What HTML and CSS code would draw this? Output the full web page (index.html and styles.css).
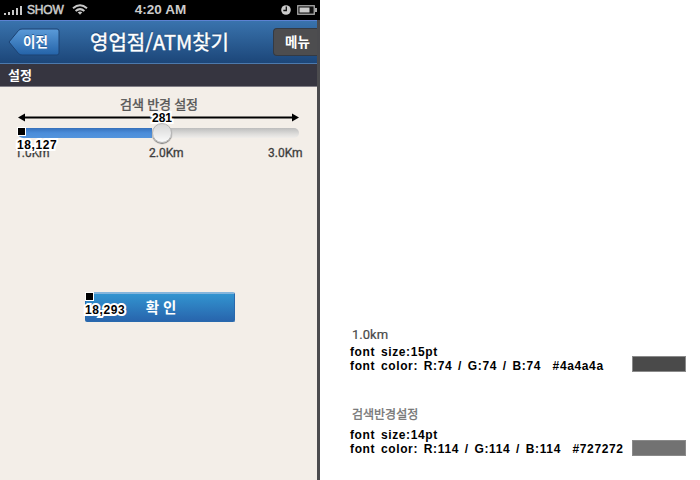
FILE: index.html
```
<!DOCTYPE html>
<html lang="ko">
<head>
<meta charset="utf-8">
<title>영업점/ATM찾기</title>
<link rel="stylesheet" href="styles.css">
</head>
<body>
<div class="page">
  <main class="phone">
    <div class="status">
      <div class="carrier">
        <svg width="20" height="12" viewBox="0 0 20 12" fill="#c8c8c8"><path d="M0 9h2v2H0zM4 8h2v3H4zM8 6h2v5H8zM12 4h2v7h-2zM16 2h2v9h-2z"/></svg>
        <span class="operator">SHOW</span>
        <svg class="wifi" width="16" height="12" viewBox="0 0 16 12" fill="none" stroke="#c8c8c8" stroke-width="2"><path d="M1 4.2Q8-1.8 15 4.2M3.6 7Q8 3.2 12.4 7"/><path d="M5.7 8.3Q8 6.7 10.3 8.3L8 10.8z" fill="#c8c8c8" stroke="none"/></svg>
      </div>
      <span class="time">4:20 AM</span>
      <div class="indicators">
        <svg width="10" height="10" viewBox="0 0 10 10"><circle cx="5" cy="5" r="4.8" fill="#ccc"/><path d="M5.3 1.5v4H2.3" fill="none" stroke="#111" stroke-width="1.3"/></svg>
        <svg width="20" height="10" viewBox="0 0 20 10"><rect x=".75" y=".75" width="16.5" height="8.5" fill="#111" stroke="#aaa" stroke-width="1.3"/><path d="M2.500 2.500h10v5h-10z" fill="#ccc"/><path d="M18 3h2v4h-2z" fill="#aaa"/></svg>
      </div>
    </div>
    <div class="screen">
      <header class="header">
        <div class="back">
          <svg class="back-shape" width="52" height="28" viewBox="0 0 52 28">
            <defs><linearGradient id="b" x2="0" y2="1"><stop stop-color="#5b9bd9"/><stop offset="1" stop-color="#2463a8"/></linearGradient></defs>
            <path d="M1 14L10.5 2.5Q12 1 14 1H49Q51 1 51 3V25Q51 27 49 27H14Q12 27 10.500 25.500Z" fill="url(#b)" stroke="#1c4273"/>
          </svg>
          <span class="back-label">이전</span>
        </div>
        <h1 class="title">영업점/ATM찾기</h1>
        <div class="menu">메뉴</div>
      </header>
      <h2 class="section">설정</h2>
      <div class="content">
        <div class="range-title">검색 반경 설정</div>
        <div class="track"><div class="fill"></div><div class="knob"></div></div>
        <div class="labels"><span>1.0Km</span><span>2.0Km</span><span>3.0Km</span></div>
        <div class="confirm">확 인</div>
      </div>
    </div>
    <svg class="arrow" width="282" height="10" viewBox="0 0 282 10"><path d="M5 4.500H277" stroke="#000" stroke-width="2"/><path d="M0 4.500L7 .5V8.500ZM281 4.500L274 .5V8.500Z"/></svg>
    <span class="note width-note">281</span>
    <i class="marker marker-track"></i>
    <span class="note track-note">18,127</span>
    <i class="marker marker-button"></i>
    <span class="note button-note">18,293</span>
  </main>
  <aside class="specs">
    <section class="spec">
      <div class="sample sample-km">1.0km</div>
      <div class="size">font size:15pt</div>
      <div class="color"><span class="values">font color: R:74 / G:74 / B:74&nbsp; #4a4a4a</span><span class="swatch dark"></span></div>
    </section>
    <section class="spec">
      <div class="sample sample-title">검색반경설정</div>
      <div class="size">font size:14pt</div>
      <div class="color"><span class="values">font color: R:114 / G:114 / B:114&nbsp; #727272</span><span class="swatch grey"></span></div>
    </section>
  </aside>
</div>
</body>
</html>
```
FILE: styles.css
```
* { box-sizing: border-box; }
body { margin: 0; background: #fff; font-family: "Liberation Sans", "Noto Sans CJK KR", sans-serif; }
svg { display: block; flex: none; }
.page { display: flex; width: 700px; height: 480px; overflow: hidden; }
.phone { position: relative; width: 320px; height: 480px; background: #4b4b4e; flex: none; white-space: nowrap; }
.status { display: grid; grid-template-columns: 1fr auto 1fr; align-items: center; height: 20px; padding: 0 3px 0 4px; background: #000; color: #ccc; font-size: 13px; line-height: 20px; }
.carrier { display: flex; align-items: center; }
.operator { width: 37px; margin-left: 3px; font-size: 12px; letter-spacing: -.2px; -webkit-text-stroke: .5px #ccc; }
.wifi { margin-left: 8px; }
.time { font-weight: bold; font-size: 13.500px; }
.indicators { display: flex; justify-content: flex-end; gap: 6px; margin-top: -1px; }
.screen { width: 317px; height: 460px; background: #f3eee8; }
.header { display: flex; align-items: center; height: 44px; padding-left: 8px; border-top: 1px solid #5d82d2; border-bottom: 1px solid #4c79ad; background: linear-gradient(#3973ad, #1c4679); color: #fff; }
.back { display: grid; width: 52px; height: 28px; place-items: center; flex: none; }
.back-shape, .back-label { grid-area: 1 / 1; }
.back-label { padding-left: 3px; margin-top: -2px; font: bold 13.500px/20px "Noto Sans CJK KR", sans-serif; text-shadow: 0 -1px #285b95; }
.title { width: 148px; margin: 0 0 0 30px; font: 400 20px/28px "Noto Sans CJK KR", sans-serif; -webkit-text-stroke: .4px #fff; text-shadow: 0 -1px 1px #163b68; }
.menu { width: 44px; height: 28px; margin: 0 0 0 35px; padding-left: 11px; flex: none; border: 1px solid #343a43; border-right: 0; border-radius: 4px 0 0 4px; background: #4d4d4f; font: bold 13.500px/24px "Noto Sans CJK KR", sans-serif; }
.section { height: 23px; margin: 0; padding-left: 8px; border-bottom: 1px solid #807e86; background: #363540; color: #fff; font: bold 13px/22px "Noto Sans CJK KR", sans-serif; }
.content { padding: 9px 15px 0; }
.range-title { margin-left: 1px; color: #555; font: 400 13px/16px "Noto Sans CJK KR", sans-serif; letter-spacing: -.15px; -webkit-text-stroke: .4px #555; text-align: center; }
.track { display: flex; align-items: center; width: 281px; height: 20px; margin: 11px 0 0 3px; }
.track::after { content: ""; order: 2; width: 137px; height: 10px; margin-left: -1px; border-radius: 0 5px 5px 0; background: linear-gradient(#bdbdbd, #dedddb 60%, #efedea); }
.fill { width: 134px; height: 10px; border-radius: 5px 0 0 5px; background: linear-gradient(#3671bb, #4b8dda 50%, #5394dc); }
.knob { z-index: 1; width: 20px; height: 20px; margin-right: -9px; flex: none; border: 1px solid #b5b5b5; border-radius: 50%; background: linear-gradient(#d6d6d6, #fafafa); box-shadow: 0 1px 1px #777; }
.labels { display: grid; grid-template-columns: 134px 119px 35px; margin-top: 1px; color: #3d3d3d; font: 400 12px/18px Roboto, sans-serif; -webkit-text-stroke: .3px #3d3d3d; }
.confirm { width: 150px; height: 30px; margin: 130px 0 0 70px; padding-left: 2px; border: 1px solid #2869ad; border-top: 2px solid #84b5dc; border-radius: 2px; background: linear-gradient(#3294d0, #2865ad); color: #fff; font: bold 14.500px/25px "Noto Sans CJK KR", sans-serif; text-align: center; }
.arrow { position: absolute; left: 18px; top: 113px; }
.note { position: absolute; color: #000; font: bold 12px/13px "Liberation Sans", sans-serif; paint-order: stroke fill; -webkit-text-stroke: 4px #fff; stroke-linejoin: round; }
.width-note { left: 152px; top: 112px; }
.track-note { left: 17px; top: 139px; letter-spacing: .6px; }
.button-note { left: 85px; top: 304px; letter-spacing: .6px; }
.marker { position: absolute; width: 9px; height: 9px; border: 1px solid #fff; background: #000; }
.marker-track { left: 17px; top: 127px; }
.marker-button { left: 85px; top: 292px; }
.specs { width: 336px; margin-left: 30px; padding-top: 324px; }
.spec { height: 81px; color: #000; font: bold 12px/14px "Liberation Sans", sans-serif; white-space: nowrap; }
.sample { height: 21px; padding-left: 2px; color: #4a4a4a; font: 400 13px/21px Roboto, sans-serif; -webkit-text-stroke: .2px #4a4a4a; }
.sample-title { height: 23px; color: #727272; font: 400 12px/18px "Noto Sans CJK KR", sans-serif; -webkit-text-stroke: .3px #727272; }
.size { letter-spacing: .6px; word-spacing: 2px; }
.color { display: flex; justify-content: space-between; }
.values { letter-spacing: .63px; word-spacing: 1.800px; }
.swatch { width: 54px; height: 16px; margin-top: -3px; border: 1px solid #8a8a8a; }
.dark { background: #4a4a4a; }
.grey { margin-top: -2px; background: #727272; }
```
